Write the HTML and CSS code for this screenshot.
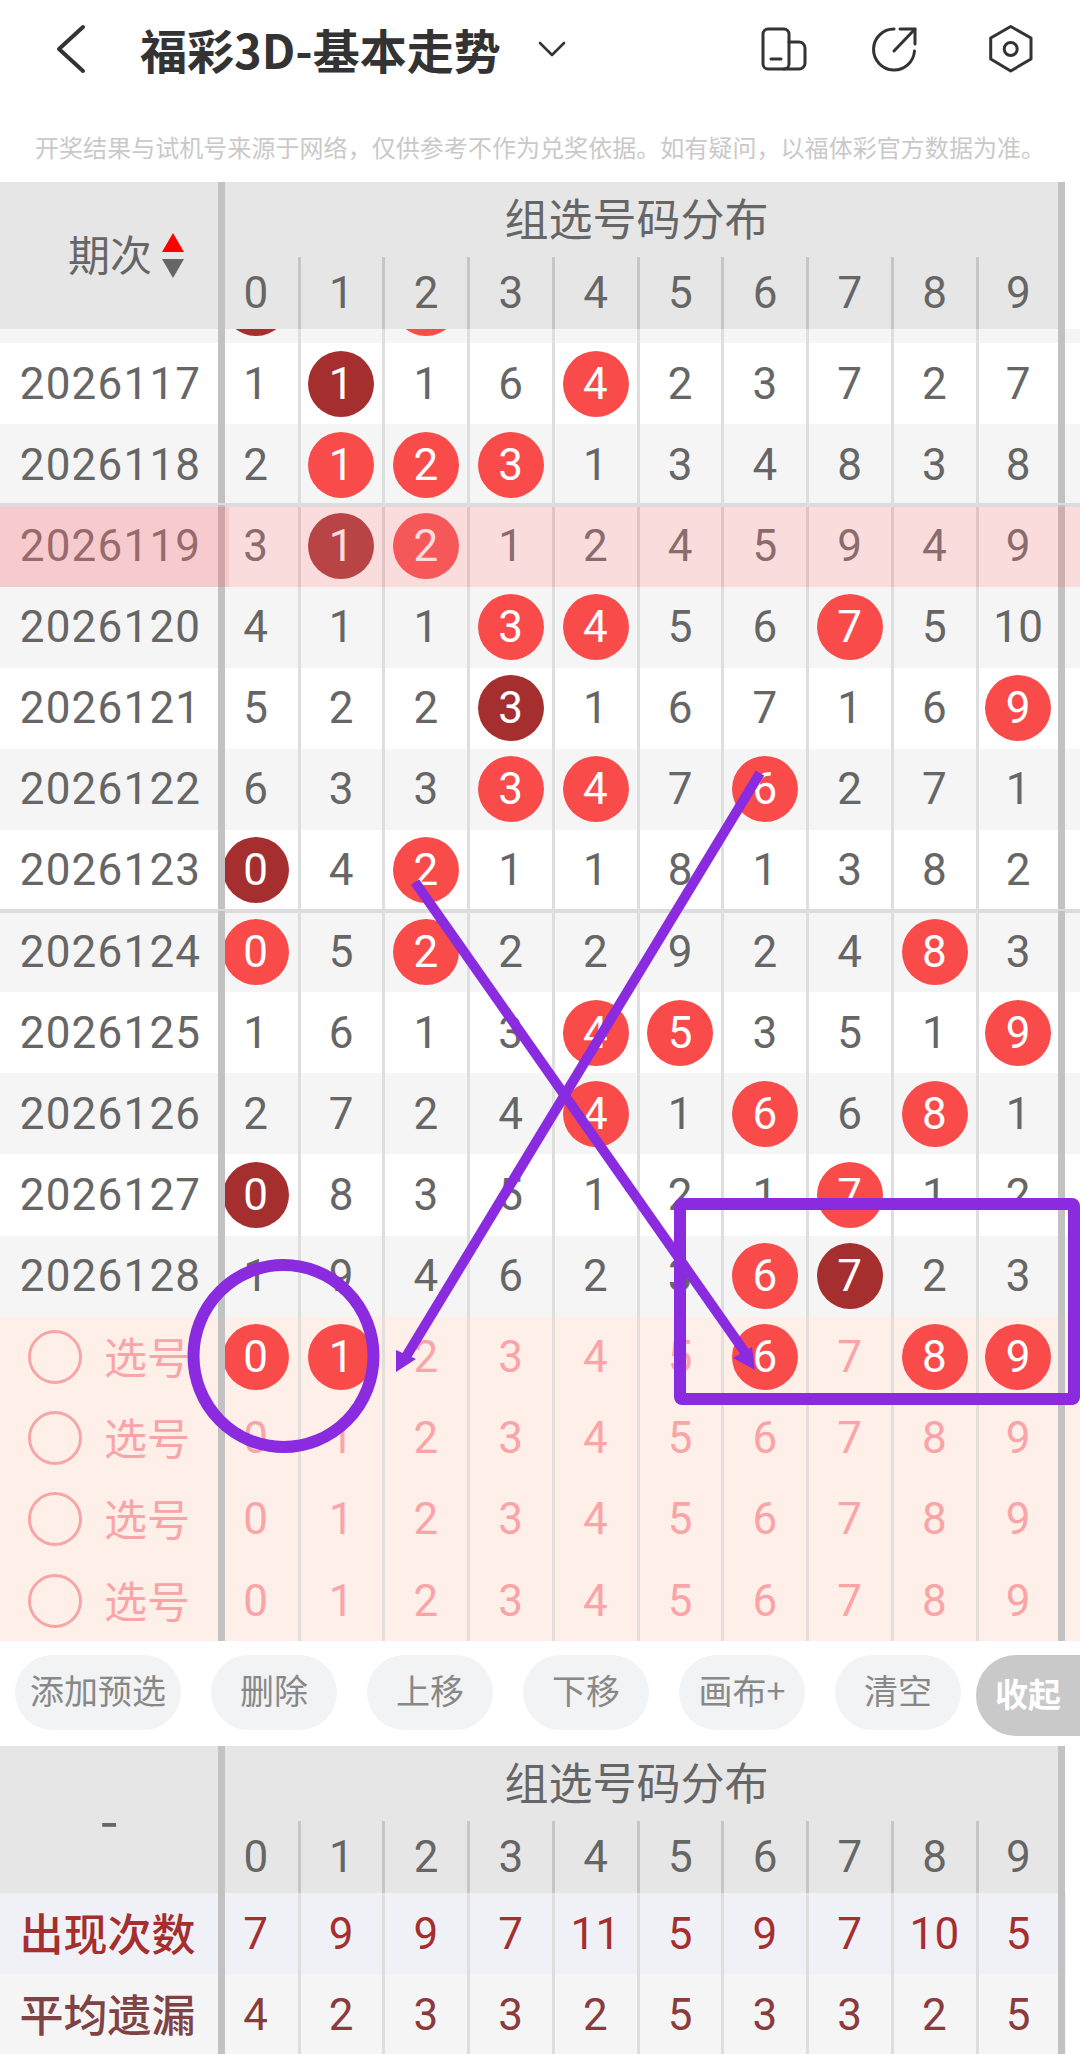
FILE: index.html
```html
<!DOCTYPE html>
<html lang="zh-CN">
<head>
    <meta charset="UTF-8">
    <meta name="viewport" content="width=device-width, initial-scale=1.0">
    <link rel="stylesheet" href="styles.css">
    <title>福彩3D-基本走势</title>
</head>
<body>
    <div class="nav">
        <svg class="back" viewBox="0 0 30 50"><polyline points="27,3 3,25 27,47"/></svg>
        <h1 class="title">福彩3D-基本走势</h1>
        <svg class="caret" viewBox="0 0 30 16"><polyline points="3,2 15,14 27,2"/></svg>
        <svg class="icon icon-device" viewBox="0 0 46 44"><rect x="2" y="2" width="26" height="40" rx="5"/><path d="M28 15h10a6 6 0 0 1 6 6v15a6 6 0 0 1-6 6H23"/><path d="M10 32h10"/></svg>
        <svg class="icon icon-share" viewBox="0 0 48 48"><path d="M24 4A20.5 20.5 0 1 0 44.5 26"/><path d="M30 4H45V19"/><path d="M24 26L45 4"/></svg>
        <svg class="icon icon-gear" viewBox="0 0 46 50"><polygon points="22.7,2.5 43,14 43,35 22.7,47 2.7,35 2.7,14"/><circle cx="22.7" cy="25" r="6.5"/></svg>
    </div>
    <p class="note">开奖结果与试机号来源于网络，仅供参考不作为兑奖依据。如有疑问，以福体彩官方数据为准。</p>

    <div class="head">
        <div class="head-left">期次<span class="sort"><i class="up"></i><i class="down"></i></span></div>
        <div class="head-title">组选号码分布</div>
        <div class="hd">0</div><div class="hd">1</div><div class="hd">2</div><div class="hd">3</div><div class="hd">4</div><div class="hd">5</div><div class="hd">6</div><div class="hd">7</div><div class="hd">8</div><div class="hd">9</div>
    </div>

    <div class="list">
        <div class="row gray first"><div class="no"></div><div class="c"><b class="ball dark"></b></div><div class="c"></div><div class="c"><b class="ball"></b></div><div class="c"></div><div class="c"></div><div class="c"></div><div class="c"></div><div class="c"></div><div class="c"></div><div class="c"></div></div>
        <div class="row"><div class="no">2026117</div><div class="c">1</div><div class="c"><b class="ball dark">1</b></div><div class="c">1</div><div class="c">6</div><div class="c"><b class="ball">4</b></div><div class="c">2</div><div class="c">3</div><div class="c">7</div><div class="c">2</div><div class="c">7</div></div>
        <div class="row gray"><div class="no">2026118</div><div class="c">2</div><div class="c"><b class="ball">1</b></div><div class="c"><b class="ball">2</b></div><div class="c"><b class="ball">3</b></div><div class="c">1</div><div class="c">3</div><div class="c">4</div><div class="c">8</div><div class="c">3</div><div class="c">8</div></div>
        <div class="row hl line"><div class="no">2026119</div><div class="c">3</div><div class="c"><b class="ball dark">1</b></div><div class="c"><b class="ball">2</b></div><div class="c">1</div><div class="c">2</div><div class="c">4</div><div class="c">5</div><div class="c">9</div><div class="c">4</div><div class="c">9</div></div>
        <div class="row gray"><div class="no">2026120</div><div class="c">4</div><div class="c">1</div><div class="c">1</div><div class="c"><b class="ball">3</b></div><div class="c"><b class="ball">4</b></div><div class="c">5</div><div class="c">6</div><div class="c"><b class="ball">7</b></div><div class="c">5</div><div class="c">10</div></div>
        <div class="row"><div class="no">2026121</div><div class="c">5</div><div class="c">2</div><div class="c">2</div><div class="c"><b class="ball dark">3</b></div><div class="c">1</div><div class="c">6</div><div class="c">7</div><div class="c">1</div><div class="c">6</div><div class="c"><b class="ball">9</b></div></div>
        <div class="row gray"><div class="no">2026122</div><div class="c">6</div><div class="c">3</div><div class="c">3</div><div class="c"><b class="ball">3</b></div><div class="c"><b class="ball">4</b></div><div class="c">7</div><div class="c"><b class="ball">6</b></div><div class="c">2</div><div class="c">7</div><div class="c">1</div></div>
        <div class="row"><div class="no">2026123</div><div class="c"><b class="ball dark">0</b></div><div class="c">4</div><div class="c"><b class="ball">2</b></div><div class="c">1</div><div class="c">1</div><div class="c">8</div><div class="c">1</div><div class="c">3</div><div class="c">8</div><div class="c">2</div></div>
        <div class="row gray line"><div class="no">2026124</div><div class="c"><b class="ball">0</b></div><div class="c">5</div><div class="c"><b class="ball">2</b></div><div class="c">2</div><div class="c">2</div><div class="c">9</div><div class="c">2</div><div class="c">4</div><div class="c"><b class="ball">8</b></div><div class="c">3</div></div>
        <div class="row"><div class="no">2026125</div><div class="c">1</div><div class="c">6</div><div class="c">1</div><div class="c">3</div><div class="c"><b class="ball">4</b></div><div class="c"><b class="ball">5</b></div><div class="c">3</div><div class="c">5</div><div class="c">1</div><div class="c"><b class="ball">9</b></div></div>
        <div class="row gray"><div class="no">2026126</div><div class="c">2</div><div class="c">7</div><div class="c">2</div><div class="c">4</div><div class="c"><b class="ball">4</b></div><div class="c">1</div><div class="c"><b class="ball">6</b></div><div class="c">6</div><div class="c"><b class="ball">8</b></div><div class="c">1</div></div>
        <div class="row"><div class="no">2026127</div><div class="c"><b class="ball dark">0</b></div><div class="c">8</div><div class="c">3</div><div class="c">5</div><div class="c">1</div><div class="c">2</div><div class="c">1</div><div class="c"><b class="ball">7</b></div><div class="c">1</div><div class="c">2</div></div>
        <div class="row gray"><div class="no">2026128</div><div class="c">1</div><div class="c">9</div><div class="c">4</div><div class="c">6</div><div class="c">2</div><div class="c">3</div><div class="c"><b class="ball">6</b></div><div class="c"><b class="ball dark">7</b></div><div class="c">2</div><div class="c">3</div></div>
        <div class="row pick"><div class="no"><span class="radio"></span><span class="pick-label">选号</span></div><div class="c"><b class="ball">0</b></div><div class="c"><b class="ball">1</b></div><div class="c">2</div><div class="c">3</div><div class="c">4</div><div class="c">5</div><div class="c"><b class="ball">6</b></div><div class="c">7</div><div class="c"><b class="ball">8</b></div><div class="c"><b class="ball">9</b></div></div>
        <div class="row pick"><div class="no"><span class="radio"></span><span class="pick-label">选号</span></div><div class="c">0</div><div class="c">1</div><div class="c">2</div><div class="c">3</div><div class="c">4</div><div class="c">5</div><div class="c">6</div><div class="c">7</div><div class="c">8</div><div class="c">9</div></div>
        <div class="row pick"><div class="no"><span class="radio"></span><span class="pick-label">选号</span></div><div class="c">0</div><div class="c">1</div><div class="c">2</div><div class="c">3</div><div class="c">4</div><div class="c">5</div><div class="c">6</div><div class="c">7</div><div class="c">8</div><div class="c">9</div></div>
        <div class="row pick"><div class="no"><span class="radio"></span><span class="pick-label">选号</span></div><div class="c">0</div><div class="c">1</div><div class="c">2</div><div class="c">3</div><div class="c">4</div><div class="c">5</div><div class="c">6</div><div class="c">7</div><div class="c">8</div><div class="c">9</div></div>
    </div>

    <div class="tools">
        <button class="btn btn-wide">添加预选</button>
        <button class="btn">删除</button>
        <button class="btn">上移</button>
        <button class="btn">下移</button>
        <button class="btn">画布+</button>
        <button class="btn">清空</button>
        <button class="btn-fold">收起</button>
    </div>

    <div class="head">
        <div class="head-left dash">-</div>
        <div class="head-title">组选号码分布</div>
        <div class="hd">0</div><div class="hd">1</div><div class="hd">2</div><div class="hd">3</div><div class="hd">4</div><div class="hd">5</div><div class="hd">6</div><div class="hd">7</div><div class="hd">8</div><div class="hd">9</div>
    </div>
    <div class="row stat stat-count"><div class="no">出现次数</div><div class="c">7</div><div class="c">9</div><div class="c">9</div><div class="c">7</div><div class="c">11</div><div class="c">5</div><div class="c">9</div><div class="c">7</div><div class="c">10</div><div class="c">5</div></div>
    <div class="row stat stat-miss"><div class="no">平均遗漏</div><div class="c">4</div><div class="c">2</div><div class="c">3</div><div class="c">3</div><div class="c">2</div><div class="c">5</div><div class="c">3</div><div class="c">3</div><div class="c">2</div><div class="c">5</div></div>

    <!-- hand drawn marks on top of the screenshot -->
    <svg class="marks" viewBox="0 0 1080 2054">
        <ellipse class="mark" cx="283.5" cy="1356" rx="90" ry="91"/>
        <rect class="mark" x="680" y="1204" width="394" height="195" rx="2"/>
        <line class="mark-line" x1="760" y1="773" x2="404" y2="1360"/>
        <polygon class="mark-head" points="396,1372 396,1350 416,1359"/>
        <line class="mark-line" x1="415" y1="882" x2="749" y2="1358"/>
        <polygon class="mark-head" points="755,1370 733,1358 752,1347"/>
    </svg>
</body>
</html>
```
FILE: styles.css
```css
:root {
    --cols: 225px 75.5px repeat(8, 84.75px) 86.5px 1fr;
}

* {
    box-sizing: border-box;
}

body {
    position: relative;
    width: 1080px;
    height: 2054px;
    margin: 0;
    overflow: hidden;
    background-color: #fff;
    font-family: Roboto, "Noto Sans CJK SC", sans-serif;
    color: #666;
}

.nav {
    display: flex;
    align-items: center;
    height: 98px;
    padding-left: 56px;
}

.nav svg {
    flex: none;
    fill: none;
    stroke: #333;
    stroke-linecap: round;
    stroke-linejoin: round;
}

.back {
    width: 30px;
    height: 50px;
    stroke-width: 4;
}

.title {
    width: 360px;
    margin: 0 0 0 54px;
    font-family: "Noto Sans CJK SC", sans-serif;
    font-size: 47px;
    font-weight: 700;
    line-height: 60px;
    color: #333;
    white-space: nowrap;
}

.caret {
    width: 30px;
    height: 16px;
    margin-left: 37px;
    stroke-width: 2.6;
}

.icon {
    stroke-width: 3;
}

.icon-device {
    width: 46px;
    height: 44px;
    margin-left: 194px;
}

.icon-share {
    width: 48px;
    height: 48px;
    margin-left: 63px;
}

.icon-gear {
    width: 46px;
    height: 50px;
    margin-left: 70px;
}

.note {
    display: flex;
    align-items: center;
    height: 84px;
    margin: 0;
    padding: 12px 0 0 35px;
    font-family: "Noto Sans CJK SC", sans-serif;
    font-size: 24px;
    letter-spacing: 0.05px;
    color: #c9c9c9;
    white-space: nowrap;
}

/* table head, used above the list and above the stats */
.head {
    display: grid;
    grid-template-columns: var(--cols);
    grid-template-rows: 75px 72px;
}

.head-left {
    grid-row: 1 / 3;
    display: flex;
    align-items: center;
    padding: 0 0 6px 68px;
    background-color: #e6e6e6;
    border-right: 7px solid #c2c2c2;
    font-family: "Noto Sans CJK SC", sans-serif;
    font-size: 42px;
}

.dash {
    justify-content: center;
    padding: 0 0 6px;
    font-size: 54px;
}

.sort {
    display: flex;
    flex-direction: column;
    gap: 7px;
    margin: 5px 0 0 10px;
}

.sort i {
    display: block;
    width: 0;
    height: 0;
    border-left: 11px solid transparent;
    border-right: 11px solid transparent;
}

.sort .up {
    border-bottom: 19px solid #f00;
}

.sort .down {
    border-top: 19px solid #666;
}

.head-title {
    grid-column: 2 / 12;
    padding-right: 10px;
    background-color: #e6e6e6;
    border-right: 7px solid #c2c2c2;
    box-shadow: inset 3px -4px 0 #e6e6e6, inset 0 -4px 0 #bfbfbf;
    font-family: "Noto Sans CJK SC", sans-serif;
    font-size: 44px;
    line-height: 70px;
    text-align: center;
}

.hd {
    display: flex;
    align-items: center;
    justify-content: center;
    background-color: #e6e6e6;
    border-right: 3px solid #c6c6c6;
    font-size: 44px;
}

.hd:nth-child(3) {
    grid-column: 2;
    padding-right: 11px;
}

.hd:last-child {
    border-right: 7px solid #c2c2c2;
}

/* scrolled list: row 116 is mostly hidden under the head */
.list {
    height: 1312px;
    overflow: hidden;
}

.row {
    position: relative;
    display: grid;
    grid-template-columns: var(--cols);
    height: 81.125px;
    font-size: 44px;
    letter-spacing: 0.3px;
}

.first {
    margin-top: -67px;
}

.gray {
    background-color: #f5f5f5;
}

.line {
    box-shadow: 0 -2px 0 #dcdcdc, inset 0 2px 0 #dcdcdc;
}

.no {
    display: flex;
    align-items: center;
    justify-content: center;
    padding-left: 3px;
    border-right: 7px solid #c2c2c2;
    letter-spacing: 1.2px;
}

.c {
    display: flex;
    align-items: center;
    justify-content: center;
    border-right: 3px solid #dedede;
}

.c:nth-child(2) {
    padding-right: 11px;
    overflow: hidden;
}

.c:last-child {
    border-right: 7px solid #c2c2c2;
}

.ball {
    flex: none;
    display: flex;
    align-items: center;
    justify-content: center;
    width: 66px;
    height: 66px;
    border-radius: 50%;
    background-color: #fa4b4b;
    color: #fff;
    font-weight: 400;
}

.dark {
    background-color: #a52f2f;
}

/* row marked by the finger, washed over with pink */
.hl::before,
.hl::after {
    content: "";
    position: absolute;
    top: 2px;
    bottom: 0;
    left: 0;
    background-color: rgba(236, 124, 131, 0.27);
}

.hl::before {
    right: 0;
}

.hl::after {
    width: 229px;
    background-color: rgba(236, 100, 110, 0.14);
}

.pick {
    background-color: #ffefe9;
    color: #f9a5a8;
}

.pick .no {
    justify-content: flex-start;
    padding-left: 28px;
    letter-spacing: 0;
}

.pick-label {
    padding-bottom: 4px;
    font-family: "Noto Sans CJK SC", sans-serif;
    font-size: 43px;
}

.pick .c {
    border-right-color: #e4dfdb;
}

.pick .c:last-child {
    border-right-color: #c2c2c2;
}

.radio {
    width: 54px;
    height: 54px;
    margin-right: 22px;
    border: 3px solid #f7a6a6;
    border-radius: 50%;
}

.tools {
    display: flex;
    gap: 30px;
    height: 105px;
    padding: 14px 0 0 15px;
}

.btn {
    width: 126px;
    height: 75px;
    padding: 0 0 7px;
    border: 0;
    border-radius: 38px;
    background-color: #f2f3f5;
    font-family: "Noto Sans CJK SC", sans-serif;
    font-size: 34px;
    color: #888;
}

.btn-wide {
    width: 166px;
}

.btn-fold {
    flex: none;
    width: 104px;
    height: 81px;
    margin-left: -15px;
    padding: 0 0 6px;
    border: 0;
    border-radius: 40px 0 0 40px;
    background-color: #c9c9c9;
    font-family: "Noto Sans CJK SC", sans-serif;
    font-size: 33px;
    font-weight: 700;
    color: #fff;
}

.stat {
    width: 1066px;
}

.stat .no {
    padding: 0 3px 3px 0;
    font-family: "Noto Sans CJK SC", sans-serif;
    font-size: 44px;
    font-weight: 500;
    letter-spacing: 0;
}

.stat-count {
    background-color: #f0f1f6;
    color: #a52f2f;
}

.stat-miss {
    background-color: #f5f5f5;
    color: #8a3b3d;
}

.stat-miss .no {
    color: #7f4346;
}

.marks {
    position: absolute;
    top: 0;
    left: 0;
    width: 1080px;
    height: 2054px;
    pointer-events: none;
}

.mark {
    fill: none;
    stroke: #8a2be0;
    stroke-width: 12;
    stroke-linejoin: round;
}

.mark-line {
    stroke: #8a2be0;
    stroke-width: 10;
}

.mark-head {
    fill: #8a2be0;
}
```
